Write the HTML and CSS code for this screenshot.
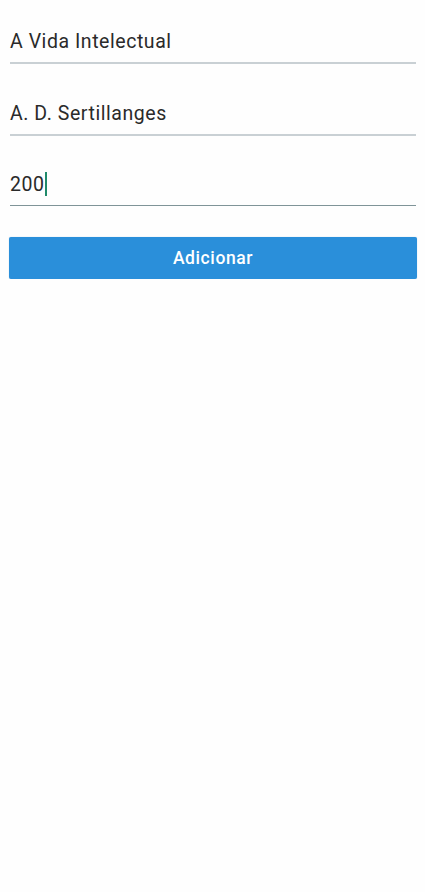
FILE: index.html
```html
<!DOCTYPE html>
<html lang="pt">
<head>
<meta charset="utf-8">
<link rel="stylesheet" href="styles.css">
<title>Adicionar livro</title>
</head>
<body>
<main class="form">
  <div class="field"><span class="value">A Vida Intelectual</span></div>
  <div class="field"><span class="value">A. D. Sertillanges</span></div>
  <div class="field field-active"><span class="value">200</span><span class="cursor"></span></div>
  <button class="btn" type="button">Adicionar</button>
</main>
</body>
</html>
```
FILE: styles.css
```css
html, body {
  margin: 0;
  padding: 0;
  background: #fefefe;
}
body {
  font-family: Roboto, "Noto Sans", sans-serif;
  color: #2a2a2a;
}
.form {
  display: flex;
  flex-direction: column;
  padding: 0 9px 0 10px;
}
.field {
  display: flex;
  align-items: flex-end;
  height: 64px;
  border-bottom: 2px solid #c9d0d4;
  box-sizing: border-box;
  padding-bottom: 9px;
  width: 406px;
}
.field + .field {
  height: 72px;
}
.field-active {
  border-bottom: 1.5px solid #7f9498;
  height: 70px !important;
}
.value {
  font-size: 19.5px;
  line-height: 23px;
  letter-spacing: 0.55px;
}
.cursor {
  display: inline-block;
  width: 2px;
  height: 24px;
  background: #1f8a6a;
  margin-left: 0;
}
.btn {
  margin: 31px 0 0 -1px;
  width: 408px;
  height: 42px;
  border: none;
  border-radius: 2px;
  background: #2a8fda;
  color: #fff;
  font-family: Roboto, sans-serif;
  font-weight: 500;
  font-size: 17.5px;
  letter-spacing: 0.6px;
  padding: 0;
  box-shadow: 0 0 1px rgba(60,140,200,0.5);
}
```
